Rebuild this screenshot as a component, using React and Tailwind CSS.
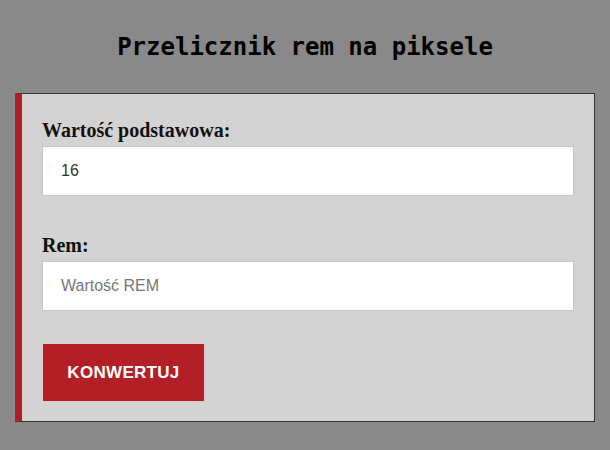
export default function App() {
  return (
    <div className="min-h-[450px] bg-[#898989]">
      <div className="h-[93px] flex items-center justify-center">
        <h1 className="text-[24px] font-bold text-black" style={{ fontFamily: '"DejaVu Sans Mono", monospace' }}>
          Przelicznik rem na piksele
        </h1>
      </div>
      <div className="mx-[15px] bg-[#d3d3d3] border border-[#333] border-l-[7px] border-l-[#b31f27] pl-[20px] pr-[20px] pt-[24px] pb-[19px]">
        <Field label="Wartość podstawowa:" value="16" />
        <div className="mt-[37px]">
          <Field label="Rem:" placeholder="Wartość REM" />
        </div>
        <button
          className="block mt-[32px] h-[59px] w-[163px] bg-[#b31f27] border border-[#e9c9ca] text-white text-[17px] font-bold uppercase tracking-[0.3px]"
          style={{ fontFamily: '"Liberation Sans", Arial, sans-serif' }}
        >
          Konwertuj
        </button>
      </div>
    </div>
  );
}

function Field({ label, value, placeholder }) {
  return (
    <div>
      <label
        className="block text-[20px] leading-6 font-bold text-[#111] mb-1"
        style={{ fontFamily: '"Liberation Serif", serif' }}
      >
        {label}
      </label>
      <input
        type="text"
        defaultValue={value}
        placeholder={placeholder}
        className="block w-full h-[50px] bg-white border border-[#c8c8c8] px-[18px] text-[16px] text-[#333] placeholder:text-[#777] outline-none"
        style={{ fontFamily: '"Liberation Sans", Arial, sans-serif' }}
      />
    </div>
  );
}
